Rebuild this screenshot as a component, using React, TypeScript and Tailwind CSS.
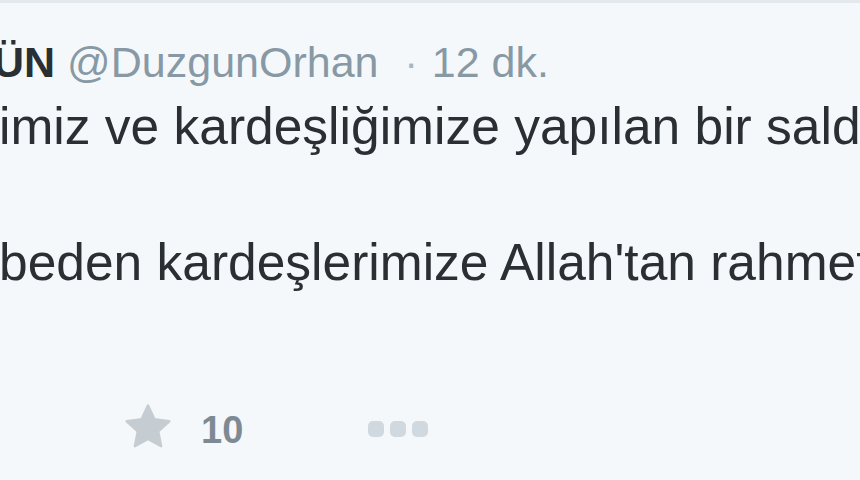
export default function App() {
  return (
    <div
      className="w-[860px] h-[480px] overflow-hidden bg-[#f5f8fa] border-t-[3px] border-[#e3e8ec]"
      style={{ fontFamily: '"Liberation Sans", Arial, sans-serif' }}
    >
      <div className="pt-[35px] whitespace-nowrap text-[43px] leading-[48px] flex items-baseline">
        <span className="font-bold text-[#292f33] ml-[-7px]">ÜN</span>
        <span className="text-[#8899a6] ml-[12px]">@DuzgunOrhan</span>
        <span className="text-[#a9b6bf] ml-[26px] text-[40px]">·</span>
        <span className="text-[#8899a6] ml-[14px]">12 dk.</span>
      </div>
      <div className="mt-[5px] whitespace-nowrap text-[51.5px] leading-[68px] text-[#292f33] ml-[-1px]">
        <p>imiz ve kardeşliğimize yapılan bir saldırıdır.</p>
        <p>&nbsp;</p>
        <p>beden kardeşlerimize Allah'tan rahmet diliyorum.</p>
      </div>
      <div className="mt-[105px] flex items-center h-[50px]">
        <svg
          className="ml-[123px] w-[50px] h-[46px]"
          viewBox="0 0 24 22"
          fill="#c5cdd3"
        >
          <path
            d="M12 1.2l3.1 6.6 7.1.9-5.3 4.9 1.4 7.1L12 17.2l-6.3 3.5 1.4-7.1L1.8 8.7l7.1-.9z"
            strokeLinejoin="round"
            stroke="#c5cdd3"
            strokeWidth="1.2"
          />
        </svg>
        <span className="ml-[28px] mt-[8px] text-[38px] font-bold text-[#7d8a94]">10</span>
        <div className="ml-[125px] mt-[6px] flex gap-[6px]">
          <span className="w-[16px] h-[16px] rounded-[5px] bg-[#d0d9df]" />
          <span className="w-[16px] h-[16px] rounded-[5px] bg-[#d0d9df]" />
          <span className="w-[16px] h-[16px] rounded-[5px] bg-[#d0d9df]" />
        </div>
      </div>
    </div>
  );
}
